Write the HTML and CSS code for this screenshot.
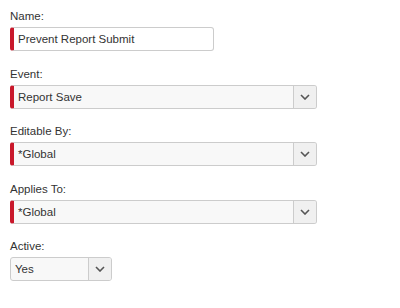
FILE: index.html
```html
<!DOCTYPE html>
<html lang="en">
<head>
  <meta charset="UTF-8">
  <title>Rule Settings</title>
  <link rel="stylesheet" href="styles.css">
</head>
<body>
  <form class="rule-form">

    <!-- Name -->
    <div class="field">
      <label>Name:</label>
      <div class="box required name-box">
        <span class="value">Prevent Report Submit</span>
      </div>
    </div>

    <!-- Event -->
    <div class="field">
      <label>Event:</label>
      <div class="box required select wide">
        <span class="value">Report Save</span>
        <span class="caret"><svg width="10" height="6" viewBox="0 0 10 6"><path d="M1 1l4 4 4-4" fill="none" stroke="#555" stroke-width="1.6"/></svg></span>
      </div>
    </div>

    <!-- Editable By -->
    <div class="field">
      <label>Editable By:</label>
      <div class="box required select wide">
        <span class="value">*Global</span>
        <span class="caret"><svg width="10" height="6" viewBox="0 0 10 6"><path d="M1 1l4 4 4-4" fill="none" stroke="#555" stroke-width="1.6"/></svg></span>
      </div>
    </div>

    <!-- Applies To -->
    <div class="field">
      <label>Applies To:</label>
      <div class="box required select wide">
        <span class="value">*Global</span>
        <span class="caret"><svg width="10" height="6" viewBox="0 0 10 6"><path d="M1 1l4 4 4-4" fill="none" stroke="#555" stroke-width="1.6"/></svg></span>
      </div>
    </div>

    <!-- Active -->
    <div class="field">
      <label>Active:</label>
      <div class="box select small">
        <span class="value">Yes</span>
        <span class="caret"><svg width="10" height="6" viewBox="0 0 10 6"><path d="M1 1l4 4 4-4" fill="none" stroke="#555" stroke-width="1.6"/></svg></span>
      </div>
    </div>

  </form>
</body>
</html>
```

FILE: styles.css
```css
body {
  margin: 0;
  background: #fff;
  font-family: 'Liberation Sans', Arial, sans-serif;
  color: #333;
}

.rule-form {
  padding: 8px 0 0 10px;
}

.field {
  margin-bottom: 14.5px;
}

.field label {
  display: block;
  font-size: 11.5px;
  line-height: 16px;
  margin-bottom: 3px;
}

.box {
  display: flex;
  align-items: stretch;
  box-sizing: border-box;
  height: 24px;
  border: 1px solid #ccc;
  border-radius: 3px;
  background: #fff;
  font-size: 11.5px;
}

.box.required {
  border-left: 4px solid #c9182b;
}

.box .value {
  flex: 1;
  display: flex;
  align-items: center;
  padding-left: 4px;
}

.name-box {
  width: 204px;
}

.select {
  background: #f8f8f8;
}

.wide {
  width: 307px;
}

.small {
  width: 102px;
}

.caret {
  width: 22px;
  display: flex;
  align-items: center;
  justify-content: center;
  border-left: 1px solid #ccc;
  background: #f0f0f0;
  border-radius: 0 2px 2px 0;
}
```
